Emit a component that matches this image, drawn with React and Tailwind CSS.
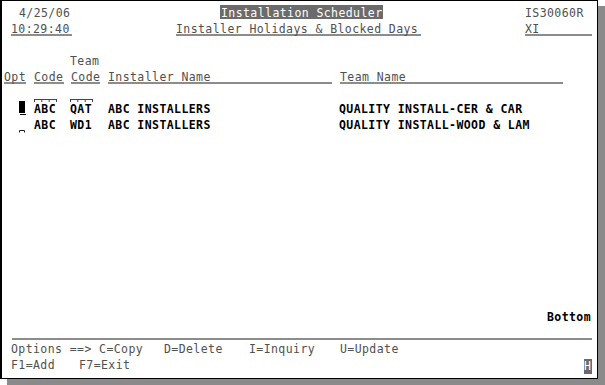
import React from "react";

const U = "h-[15px] border-b-2 border-[#8c8c8c]";

function Over() {
  return (
    <svg className="absolute -top-[2px] left-0" width="23" height="4" viewBox="0 0 23 4">
      <path d="M0.5 0.5H22.5M0.5 0V3M7.8 0V3M15.2 0V3M22.5 0V3" stroke="#444" strokeWidth="1" fill="none" />
    </svg>
  );
}

function Row({ children, className = "" }) {
  return <div className={`flex items-start h-4 shrink-0 ${className}`}>{children}</div>;
}

export default function App() {
  return (
    <div className="w-[605px] h-[385px] bg-white overflow-hidden">
      <div
        className="w-[598px] h-[379px] border-l-2 border-t border-r border-b border-black bg-white shadow-[7px_6px_0_#8a8a8a] pt-[4px] flex flex-col text-[11.5px] tracking-[0.416px] leading-4 whitespace-pre text-[#505050]"
        style={{ fontFamily: '"DejaVu Sans Mono", "Liberation Mono", monospace' }}
      >
        {/* row 0 */}
        <Row>
          <span className="ml-[17px] w-[52px] shrink-0">4/25/06</span>
          <span className="ml-[149px] w-[163px] shrink-0 h-[14px] bg-[#6b6b6b] text-white pl-px">Installation Scheduler</span>
          <span className="ml-[142px] w-[59px] shrink-0">IS30060R</span>
        </Row>
        {/* row 1 */}
        <Row>
          <span className={`ml-[9px] w-[61px] shrink-0 ${U}`}>10:29:40</span>
          <span className={`ml-[104px] w-[245px] shrink-0 ${U}`}>Installer Holidays &amp; Blocked Days</span>
          <span className={`ml-[104px] w-[67px] shrink-0 ${U}`}>XI</span>
        </Row>
        <Row />
        {/* row 3 */}
        <Row>
          <span className="ml-[68px] w-[30px] shrink-0">Team</span>
        </Row>
        {/* row 4 */}
        <Row>
          <span className={`ml-[2px] w-[22px] shrink-0 ${U}`}>Opt</span>
          <span className={`ml-[8px] w-[30px] shrink-0 ${U}`}>Code</span>
          <span className={`ml-[7px] w-[29px] shrink-0 ${U}`}>Code</span>
          <span className={`ml-[8px] w-[224px] shrink-0 ${U}`}>Installer Name</span>
          <span className={`ml-[8px] w-[223px] shrink-0 ${U}`}>Team Name</span>
        </Row>
        <Row />
        {/* row 6 */}
        <Row className="font-bold text-black">
          <span className="ml-[17px] w-[7px] shrink-0 flex flex-col">
            <span className="block w-[6px] h-[12px] bg-black" />
            <span className="block ml-px mt-px w-[6px] h-px bg-black" />
          </span>
          <span className="ml-[8px] w-[22px] shrink-0 relative">
            <Over />
            ABC
          </span>
          <span className="ml-[14px] w-[22px] shrink-0 relative">
            <Over />
            QAT
          </span>
          <span className="ml-[16px] w-[104px] shrink-0">ABC INSTALLERS</span>
          <span className="ml-[127px] shrink-0">QUALITY INSTALL-CER &amp; CAR</span>
        </Row>
        {/* row 7 */}
        <Row className="font-bold text-black">
          <span className="ml-[17px] w-[7px] shrink-0 pt-[13px]">
            <svg className="block" width="6" height="3" viewBox="0 0 6 3">
              <path d="M0.5 2.5V0.5H5.5V2.5" stroke="#222" strokeWidth="1" fill="none" />
            </svg>
          </span>
          <span className="ml-[8px] w-[22px] shrink-0">ABC</span>
          <span className="ml-[14px] w-[22px] shrink-0">WD1</span>
          <span className="ml-[16px] w-[104px] shrink-0">ABC INSTALLERS</span>
          <span className="ml-[127px] shrink-0">QUALITY INSTALL-WOOD &amp; LAM</span>
        </Row>
        <Row />
        <Row />
        <Row />
        <Row />
        <Row />
        <Row />
        <Row />
        <Row />
        <Row />
        <Row />
        <Row />
        {/* row 19 */}
        <Row className="font-bold text-black">
          <span className="ml-[545px] shrink-0">Bottom</span>
        </Row>
        {/* row 20 */}
        <Row>
          <span className={`ml-[10px] w-[580px] shrink-0 ${U}`}></span>
        </Row>
        {/* row 21 */}
        <Row>
          <span className="ml-[9px] w-[132px] shrink-0">Options ==&gt; C=Copy</span>
          <span className="ml-[21px] w-[59px] shrink-0">D=Delete</span>
          <span className="ml-[26px] w-[66px] shrink-0">I=Inquiry</span>
          <span className="ml-[25px] shrink-0">U=Update</span>
        </Row>
        {/* row 22 */}
        <Row>
          <span className="ml-[9px] w-[44px] shrink-0">F1=Add</span>
          <span className="ml-[24px] w-[52px] shrink-0">F7=Exit</span>
          <span className="ml-[453px] mt-[2px] w-[8px] h-[15px] shrink-0 bg-[#6b6b6b] text-white tracking-normal leading-[15px]">H</span>
        </Row>
      </div>
    </div>
  );
}
